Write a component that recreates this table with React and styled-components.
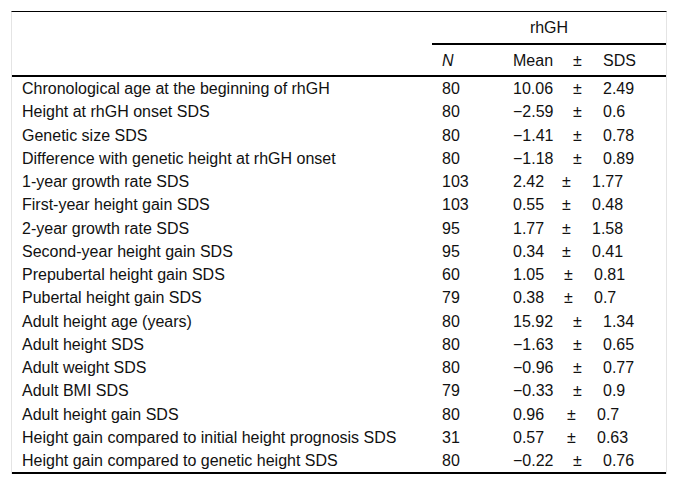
import React from "react";
import styled, { createGlobalStyle } from "styled-components";

const Global = createGlobalStyle`
  html, body { margin: 0; padding: 0; background: #fff; }
  body { font-family: "Liberation Sans", Arial, sans-serif; color: #111; }
`;

const Page = styled.div`
  padding: 11px 10px 0 11px;
`;

const Table = styled.table`
  width: 656px;
  border-collapse: separate;
  border-spacing: 0;
  border-top: 1px solid #000;
  border-left: 1px solid #e4e4e4;
  border-right: 1px solid #e4e4e4;
  font-size: 16px;
  table-layout: fixed;
`;

const HeadCell = styled.th`
  font-weight: normal;
  text-align: ${(p) => (p.$center ? "center" : "left")};
  height: ${(p) => p.$h}px;
  padding: 0 0 0 ${(p) => p.$pl ?? 10}px;
  border-bottom: ${(p) => (p.$line ? "2px solid #000" : "none")};
  font-style: ${(p) => (p.$italic ? "italic" : "normal")};
  vertical-align: middle;
  line-height: 19px;
`;

const Cell = styled.td`
  padding: 2px 0 2px ${(p) => p.$pl ?? 10}px;
  line-height: 19.25px;
  white-space: nowrap;
  border-bottom: ${(p) => (p.$last ? "2px solid #000" : "none")};
`;

const Stats = styled.div`
  display: flex;
  align-items: baseline;
`;

const Val = styled.span`
  width: ${(p) => p.$w}px;
  flex: none;
`;

const Pm = styled.span`
  width: 30px;
  flex: none;
`;

const rows = [
  ["Chronological age at the beginning of rhGH", "80", "10.06", "2.49", 60],
  ["Height at rhGH onset SDS", "80", "\u22122.59", "0.6", 60],
  ["Genetic size SDS", "80", "\u22121.41", "0.78", 60],
  ["Difference with genetic height at rhGH onset", "80", "\u22121.18", "0.89", 60],
  ["1-year growth rate SDS", "103", "2.42", "1.77", 49],
  ["First-year height gain SDS", "103", "0.55", "0.48", 49],
  ["2-year growth rate SDS", "95", "1.77", "1.58", 49],
  ["Second-year height gain SDS", "95", "0.34", "0.41", 49],
  ["Prepubertal height gain SDS", "60", "1.05", "0.81", 51],
  ["Pubertal height gain SDS", "79", "0.38", "0.7", 51],
  ["Adult height age (years)", "80", "15.92", "1.34", 60],
  ["Adult height SDS", "80", "\u22121.63", "0.65", 60],
  ["Adult weight SDS", "80", "\u22120.96", "0.77", 60],
  ["Adult BMI SDS", "79", "\u22120.33", "0.9", 60],
  ["Adult height gain SDS", "80", "0.96", "0.7", 54],
  ["Height gain compared to initial height prognosis SDS", "31", "0.57", "0.63", 54],
  ["Height gain compared to genetic height SDS", "80", "\u22120.22", "0.76", 60],
];

export default function App() {
  return (
    <Page>
      <Global />
      <Table>
        <colgroup>
          <col style={{ width: 420 }} />
          <col style={{ width: 71 }} />
          <col />
        </colgroup>
        <thead>
          <tr>
            <HeadCell $h={31} />
            <HeadCell $h={31} colSpan={2} $center $line $pl={0}>
              rhGH
            </HeadCell>
          </tr>
          <tr>
            <HeadCell $h={30} $line />
            <HeadCell $h={30} $line $italic>
              N
            </HeadCell>
            <HeadCell $h={30} $line>
              <Stats>
                <Val $w={60}>Mean</Val>
                <Pm>±</Pm>
                <span>SDS</span>
              </Stats>
            </HeadCell>
          </tr>
        </thead>
        <tbody>
          {rows.map(([label, n, mean, sd, w], i) => {
            const last = i === rows.length - 1;
            return (
              <tr key={label}>
                <Cell $pl={10} $last={last}>{label}</Cell>
                <Cell $last={last}>{n}</Cell>
                <Cell $last={last}>
                  <Stats>
                    <Val $w={w}>{mean}</Val>
                    <Pm>±</Pm>
                    <span>{sd}</span>
                  </Stats>
                </Cell>
              </tr>
            );
          })}
        </tbody>
      </Table>
    </Page>
  );
}
